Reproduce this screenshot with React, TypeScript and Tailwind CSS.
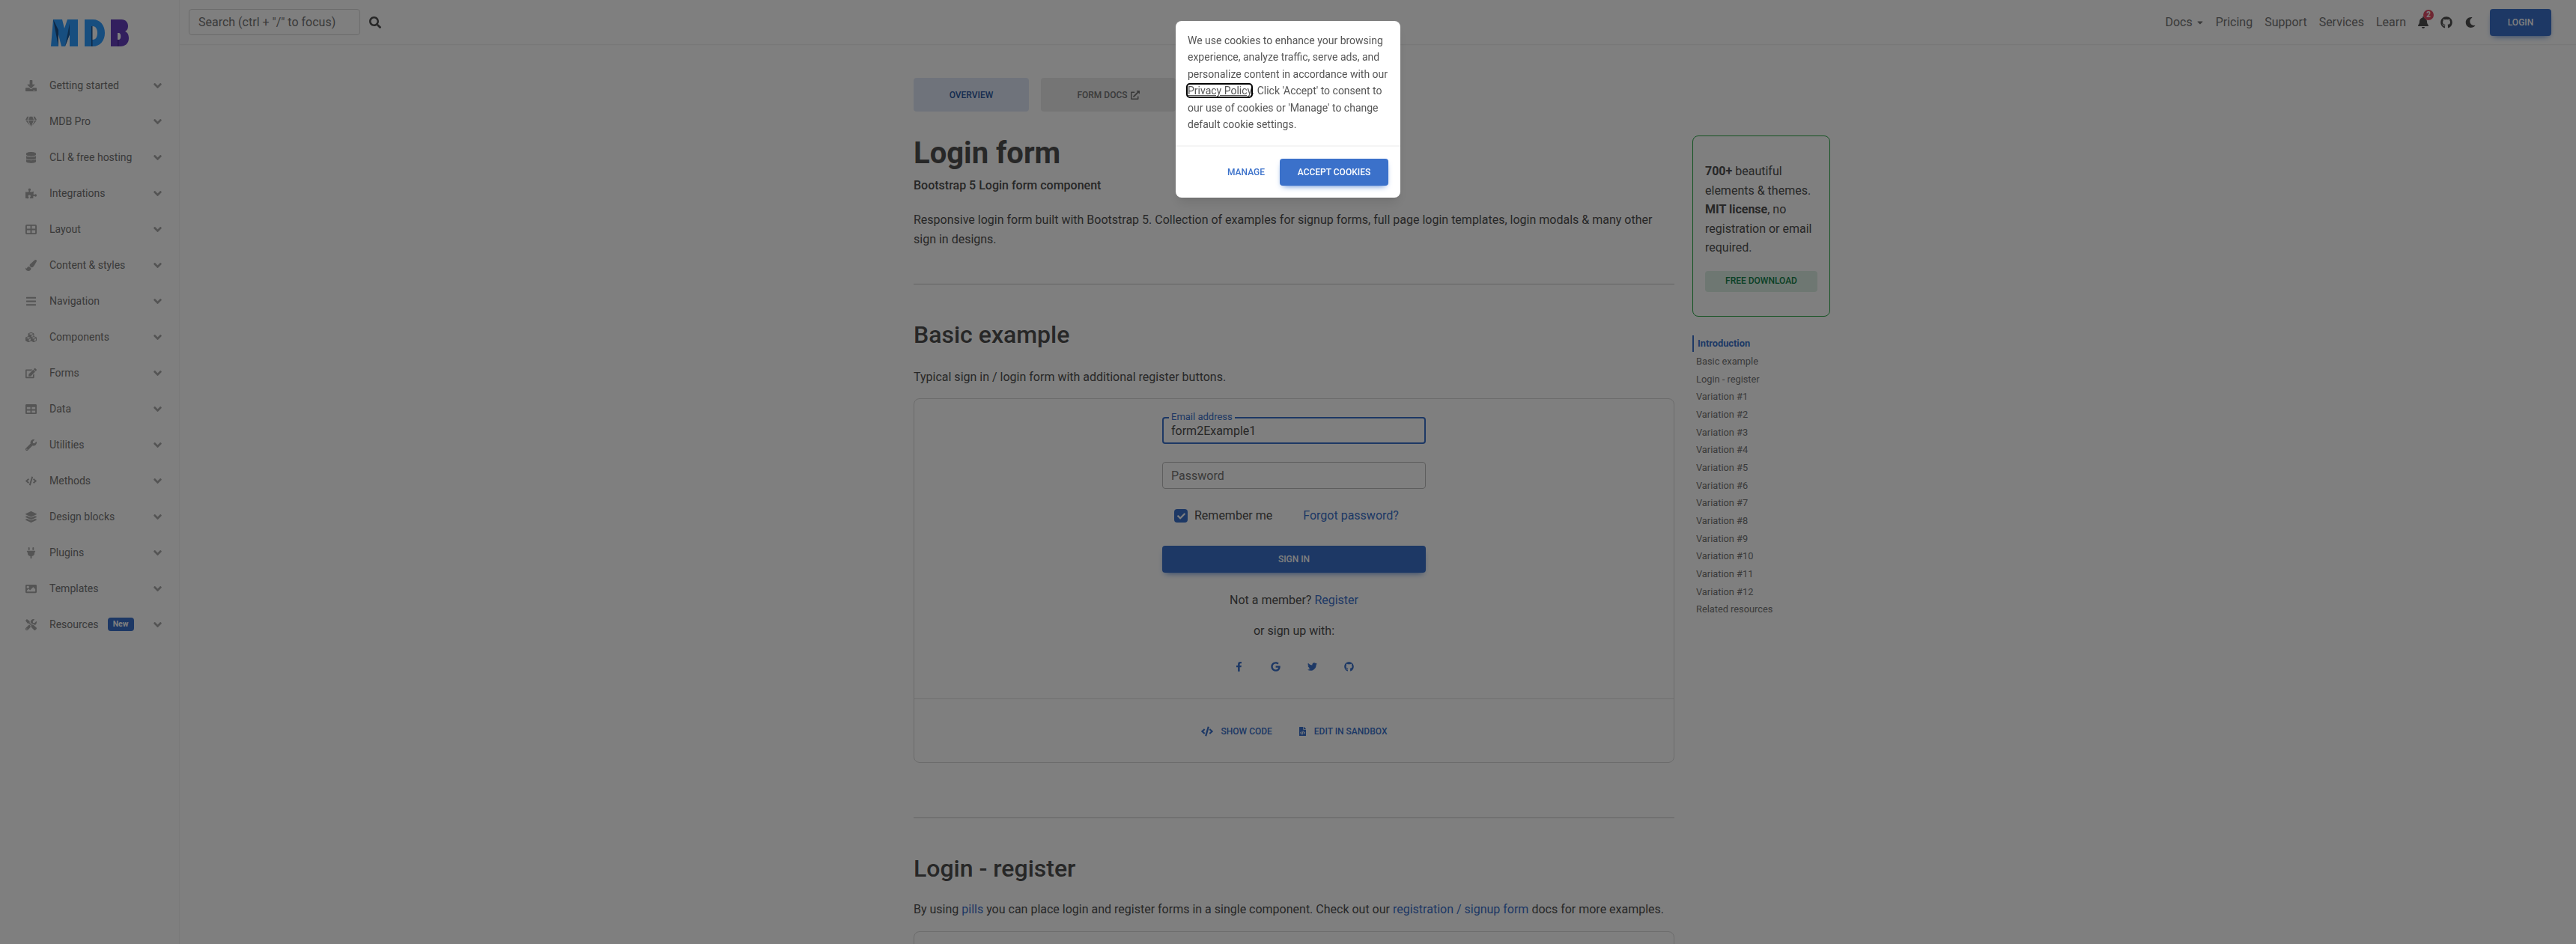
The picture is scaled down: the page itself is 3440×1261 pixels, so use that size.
import React from "react";
import {
  FaDownload, FaGem, FaDatabase, FaPuzzlePiece, FaPaintBrush, FaBars, FaCubes, FaEdit, FaTable, FaWrench, FaCode,
  FaLayerGroup, FaPlug, FaImage, FaTools, FaSearch, FaAngleDown, FaBell, FaGithub, FaMoon, FaFacebookF, FaGoogle,
  FaTwitter, FaExternalLinkAlt, FaFileCode, FaCheck, FaCaretDown,
} from "react-icons/fa";
import { FaTableCellsLarge } from "react-icons/fa6";

const nav: [string, React.ComponentType<{ className?: string }>][] = [
  ["Getting started", FaDownload],
  ["MDB Pro", FaGem],
  ["CLI & free hosting", FaDatabase],
  ["Integrations", FaPuzzlePiece],
  ["Layout", FaTableCellsLarge],
  ["Content & styles", FaPaintBrush],
  ["Navigation", FaBars],
  ["Components", FaCubes],
  ["Forms", FaEdit],
  ["Data", FaTable],
  ["Utilities", FaWrench],
  ["Methods", FaCode],
  ["Design blocks", FaLayerGroup],
  ["Plugins", FaPlug],
  ["Templates", FaImage],
  ["Resources", FaTools],
];

const toc = ["Basic example", "Login - register", ...Array.from({ length: 12 }, (_, i) => `Variation #${i + 1}`), "Related resources"];

function Logo() {
  return (
    <svg width="104" height="36" viewBox="0 0 104 36" className="block">
      <path d="M0 36 3 0H15L18 12 22 0H36V36H25V20L19 36H14L10 20V36Z" fill="#2f9cff" />
      <path d="M3 0 10 36V14L3 0Z" fill="#1d4f86" />
      <path d="M25 20V5L19 36Z" fill="#1d5a98" />
      <path d="M45 0H56C66 0 72 8 72 18C72 28 66 36 56 36H45Z M54 9V27H56C60 27 62 23 62 18C62 13 60 9 56 9Z" fillRule="evenodd" fill="#2f9cff" />
      <rect x="54" y="9" width="1.5" height="27" fill="#1d4f86" />
      <path d="M80 0H94C100 0 103 4 103 9C103 13 101 15 99 16C102 17 104 20 104 25C104 32 99 36 93 36H80Z M89 18V27H91C94 27 94 18 91 18Z" fillRule="evenodd" fill="#643ebc" />
      <rect x="89" y="27" width="1.5" height="9" fill="#4a2a94" />
    </svg>
  );
}

function Sidebar() {
  return (
    <aside className="w-[240px] shrink-0 h-full border-r border-[#f5f5f5]">
      <div className="h-[90px] pt-[26px] pl-[68px]"><Logo /></div>
      <ul>
        {nav.map(([label, Icon]) => (
          <li key={label} className="h-[48px] flex items-center pl-[34px] pr-[20px] text-[14px] text-[#757575]">
            <span className="w-[32px] flex"><Icon className="w-[15px] h-[15px] text-[#a8a8a8]" /></span>
            <span>{label}</span>
            {label === "Resources" && (
              <span className="ml-[12px] w-[35px] h-[18px] rounded-[4px] bg-[#3b71ca] text-white text-[10.5px] font-bold flex items-center justify-center">New</span>
            )}
            <FaAngleDown className="ml-auto w-[17px] h-[17px] text-[#a8a8a8]" />
          </li>
        ))}
      </ul>
    </aside>
  );
}

function Header() {
  return (
    <header className="h-[60px] border-b border-[#f0f0f0] flex items-center pl-[12px] pr-[33px] shadow-[0_1px_2px_rgba(0,0,0,0.03)]">
      <input
        readOnly
        placeholder={'Search (ctrl + "/" to focus)'}
        className="w-[229px] h-[35px] border border-[#d6d6d6] rounded-[4px] px-[12px] text-[16px] placeholder:text-[#757575] outline-none"
      />
      <FaSearch className="ml-[12px] w-[16px] h-[16px] text-[#4f4f4f]" />
      <nav className="ml-auto flex items-center text-[16px] text-[#757575]">
        <span>Docs</span>
        <FaCaretDown className="ml-[5px] w-[10px] h-[12px] text-[#757575]" />
        <span className="ml-[16px]">Pricing</span>
        <span className="ml-[16px]">Support</span>
        <span className="ml-[16px]">Services</span>
        <span className="ml-[16px]">Learn</span>
        <span className="relative ml-[16px]">
          <FaBell className="w-[14px] h-[16px] text-[#4f4f4f]" />
          <span className="absolute -top-[9px] left-[7px] w-[14px] h-[14px] rounded-full bg-[#dc4c64] text-white text-[10px] font-bold flex items-center justify-center">2</span>
        </span>
        <FaGithub className="ml-[16px] w-[16px] h-[16px] text-[#4f4f4f]" />
        <FaMoon className="ml-[17px] w-[14px] h-[16px] text-[#4f4f4f]" />
        <button className="ml-[19px] w-[82px] h-[36px] rounded-[4px] bg-[#3b71ca] text-white text-[12px] font-medium shadow-[0_4px_9px_-4px_#3b71ca]">LOGIN</button>
      </nav>
    </header>
  );
}

function LoginCard() {
  return (
    <div className="mt-[15px] h-[487px] border border-[#d8d8d8] rounded-[8px] flex flex-col">
      <form className="h-[400px] w-[352px] mx-auto pt-[24px] flex flex-col text-[16px] text-[#4f4f4f]">
        <div className="relative h-[36px]">
          <input readOnly value="form2Example1" className="w-full h-full border-2 border-[#3b71ca] rounded-[4px] pl-[10px] text-[16px] text-[#4f4f4f] outline-none" />
          <span className="absolute -top-[9px] left-[9px] px-[3px] bg-white text-[13px] leading-[18px] text-[#3b71ca]">Email address</span>
        </div>
        <input readOnly placeholder="Password" className="mt-[24px] h-[36px] border border-[#bdbdbd] rounded-[4px] px-[11px] text-[16px] placeholder:text-[#757575] outline-none" />
        <div className="mt-[27px] h-[18px] flex items-center">
          <span className="ml-[16px] w-[18px] h-[18px] rounded-[4px] bg-[#3b71ca] flex items-center justify-center"><FaCheck className="w-[11px] h-[11px] text-white" /></span>
          <span className="ml-[9px]">Remember me</span>
          <a className="ml-[41px] text-[#3b71ca]">Forgot password?</a>
        </div>
        <button type="button" className="mt-[31px] h-[36px] rounded-[4px] bg-[#3b71ca] text-white text-[12px] font-medium shadow-[0_4px_9px_-4px_#3b71ca]">SIGN IN</button>
        <p className="mt-[24px] leading-[26px] text-center">Not a member? <a className="text-[#3b71ca]">Register</a></p>
        <p className="mt-[15px] leading-[26px] text-center">or sign up with:</p>
        <div className="mt-[27px] h-[14px] flex justify-center items-center gap-[35px] text-[#3b71ca]">
          <span className="w-[14px] flex justify-center"><FaFacebookF className="w-[13px] h-[13px]" /></span>
          <span className="w-[14px] flex justify-center"><FaGoogle className="w-[13px] h-[13px]" /></span>
          <span className="w-[14px] flex justify-center"><FaTwitter className="w-[13px] h-[13px]" /></span>
          <span className="w-[14px] flex justify-center"><FaGithub className="w-[13px] h-[13px]" /></span>
        </div>
      </form>
      <div className="flex-1 border-t border-[#e0e0e0] flex items-center justify-center pt-[2px] text-[12px] font-medium text-[#3b71ca]">
        <FaCode className="w-[16px] h-[14px]" />
        <span className="ml-[11px]">SHOW CODE</span>
        <FaFileCode className="ml-[36px] w-[9px] h-[12px]" />
        <span className="ml-[11px]">EDIT IN SANDBOX</span>
      </div>
    </div>
  );
}

function Article() {
  return (
    <article className="w-[1016px] shrink-0 text-[16px] leading-[26px] text-[#4f4f4f]">
      <div className="flex gap-[16px] text-[12px] font-medium">
        <a className="w-[154px] h-[45px] rounded-[4px] bg-[#dfe7f6] text-[#2c58a0] flex items-center justify-center">OVERVIEW</a>
        <a className="w-[180px] h-[45px] rounded-[4px] bg-[#ebebeb] text-[#757575] flex items-center justify-center gap-[4px]">FORM DOCS <FaExternalLinkAlt className="w-[12px] h-[12px]" /></a>
      </div>
      <h1 className="mt-[32px] text-[40px] leading-[48px] font-bold">Login form</h1>
      <p className="mt-[6px] font-medium">Bootstrap 5 Login form component</p>
      <p className="mt-[20px]">Responsive login form built with Bootstrap 5. Collection of examples for signup forms, full page login templates, login modals &amp; many other sign in designs.</p>
      <hr className="mt-[46px] border-t border-[#c9c9c9]" />
      <h2 className="mt-[48px] text-[32px] leading-[38px] font-medium">Basic example</h2>
      <p className="mt-[25px]">Typical sign in / login form with additional register buttons.</p>
      <LoginCard />
      <hr className="mt-[73px] border-t border-[#c9c9c9]" />
      <h2 className="mt-[48px] text-[32px] leading-[38px] font-medium">Login - register</h2>
      <p className="mt-[23px]">By using <a className="text-[#3b71ca]">pills</a> you can place login and register forms in a single component. Check out our <a className="text-[#3b71ca]">registration / signup form</a> docs for more examples.</p>
      <div className="mt-[16px] h-[300px] border border-[#d8d8d8] rounded-[8px]" />
    </article>
  );
}

function Aside() {
  return (
    <aside className="ml-[24px] w-[184px] shrink-0 pt-[77px]">
      <div className="h-[242px] border border-[#28a745] rounded-[8px] px-[16px] pt-[34px] text-[16px] leading-[25.6px] text-[#4f4f4f]">
        <p><strong className="font-bold">700+</strong> beautiful elements &amp; themes. <strong className="font-bold">MIT license</strong>, no registration or email required.</p>
        <a className="mt-[18px] h-[28px] rounded-[4px] bg-[#dcefe4] text-[#14804a] text-[12px] font-medium flex items-center justify-center">FREE DOWNLOAD</a>
      </div>
      <ul className="mt-[25px] text-[12.8px] leading-[20.48px] text-[#757575]">
        <li className="border-l-2 border-[#3b71ca] pl-[5px] py-[1px] mb-[1px] font-bold text-[#3b71ca]">Introduction</li>
        {toc.map((t) => (
          <li key={t} className="pl-[5px] py-[1.6px]">{t}</li>
        ))}
      </ul>
    </aside>
  );
}

function CookieModal() {
  return (
    <div className="fixed inset-0 bg-black/50 flex justify-center items-start pt-[28px]">
      <div className="w-[300px] bg-white rounded-[8px] shadow-lg">
        <p className="px-[16px] pt-[15px] pb-[17px] text-[14px] leading-[22.4px] text-[#555555]">
          We use cookies to enhance your browsing experience, analyze traffic, serve ads, and personalize content in accordance with our{" "}
          <a className="underline outline-2 outline-black rounded-[3px]">Privacy Policy</a>. Click 'Accept' to consent to our use of cookies or 'Manage' to change default cookie settings.
        </p>
        <div className="border-t-2 border-[#f5f5f5] p-[16px] flex justify-end items-center text-[12px] font-medium">
          <button className="mr-[20px] text-[#3b71ca]">MANAGE</button>
          <button className="w-[145px] h-[36px] rounded-[4px] bg-[#3b71ca] text-white shadow-[0_4px_9px_-4px_#3b71ca]">ACCEPT COOKIES</button>
        </div>
      </div>
    </div>
  );
}

export default function App() {
  return (
    <div className="h-screen overflow-hidden bg-white flex [font-family:Roboto,sans-serif]">
      <Sidebar />
      <main className="flex-1 min-w-0">
        <Header />
        <div className="w-[1240px] mx-auto pt-[44px] flex">
          <Article />
          <Aside />
        </div>
      </main>
      <CookieModal />
    </div>
  );
}
